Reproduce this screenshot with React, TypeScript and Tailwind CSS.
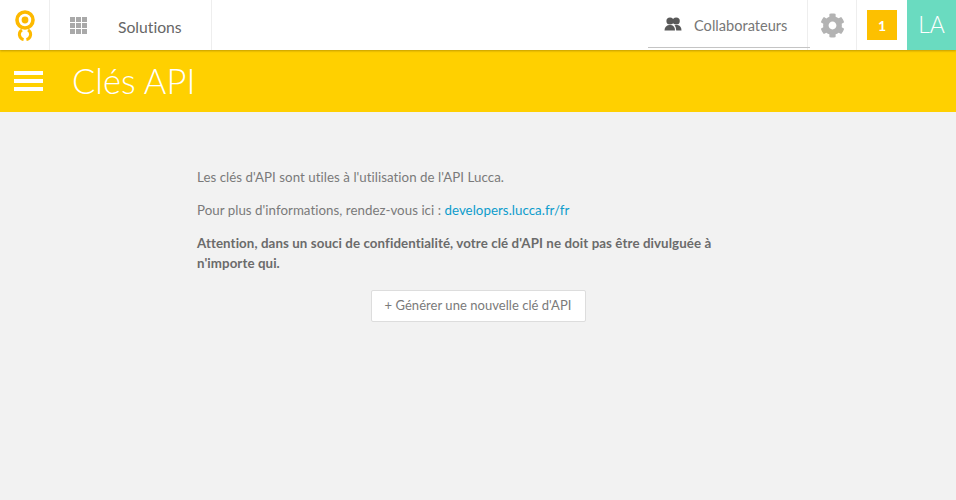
import { FaCog } from "react-icons/fa";

function Logo() {
	return (
		<svg width="22" height="32" viewBox="0 0 22 32" fill="none">
			<circle cx="11" cy="11" r="8" stroke="#fdb900" strokeWidth="3.6" />
			<circle cx="11" cy="11" r="3.4" fill="#fdb900" />
			<path d="M8 21 A5.2 5.2 0 0 0 9.6 30.6" stroke="#fdb900" strokeWidth="3" />
			<path d="M14 21 A5.2 5.2 0 0 1 12.4 30.6" stroke="#fdb900" strokeWidth="3" />
		</svg>
	);
}

function Grid() {
	return (
		<div className="grid w-[17px] grid-cols-3 gap-px">
			{Array.from({ length: 9 }).map((_, i) => (
				<span key={i} className="h-[5px] bg-[#a9a9a9]" />
			))}
		</div>
	);
}

function Users() {
	return (
		<svg width="18" height="14" viewBox="0 0 18 14" fill="#595959">
			<circle cx="6" cy="4" r="3.6" />
			<circle cx="12.2" cy="4" r="3.6" />
			<path d="M0.5 13.5 C0.5 10 2.5 8.5 5 8 L7 8 C9.5 8.5 11 10 11 13.5 Z" />
			<path d="M11.5 8 L13.5 8 C16 8.5 17.5 10 17.5 13.5 L12.2 13.5 C12 11 11.6 9.5 10.5 8.6 Z" />
		</svg>
	);
}

export default function App() {
	return (
		<div className="h-[500px] w-[956px] overflow-hidden bg-[#f2f2f2] font-['Lato','Liberation_Sans',sans-serif] text-[13.3px] text-[#7a7a7a] [font-variant-ligatures:none]">
			<header className="relative z-10 flex h-[50px] items-center bg-white shadow-[0_1px_2px_rgba(120,90,0,0.45)]">
				<div className="flex h-full w-[50px] items-center justify-center border-r border-[#eee]">
					<Logo />
				</div>
				<div className="flex h-full w-[162px] items-center border-r border-[#eee] pl-5">
					<Grid />
					<span className="ml-[31px] pt-[5px] text-[15.7px] text-[#666]">Solutions</span>
				</div>
				<div className="ml-auto flex h-full items-center">
					<div className="relative z-10 flex h-[48px] w-[162px] items-center self-start border-b border-[#c4c4c4] pl-[16px]">
						<Users />
						<span className="ml-[12px] pt-[5px] text-[14.6px] text-[#777]">Collaborateurs</span>
					</div>
					<div className="-ml-[3px] flex h-full w-[50px] items-center justify-center border-x border-[#eee]">
						<FaCog size={25} className="text-[#b3b3b3]" />
					</div>
					<div className="flex w-[50px] justify-center">
						<span className="flex h-[30px] w-[30px] items-center justify-center bg-[#fdc000] text-[14px] font-bold text-white">1</span>
					</div>
					<div className="flex h-full w-[49px] items-center justify-center bg-[#6adbc0] pb-[2px] text-[23px] font-light text-white">LA</div>
				</div>
			</header>
			<div className="flex h-[62px] items-center bg-[#ffd000] pl-[14px]">
				<div className="flex w-[29px] flex-col gap-[4px]">
					<span className="h-[4px] bg-white" />
					<span className="h-[4px] bg-white" />
					<span className="h-[4px] bg-white" />
				</div>
				<h1 className="ml-[29px] text-[34.5px] font-light text-white">Clés API</h1>
			</div>
			<main className="ml-[197px] w-[562px] pt-[55px] tracking-[0.04px]">
				<p className="leading-[20px]">Les clés d'API sont utiles à l'utilisation de l'API Lucca.</p>
				<p className="mt-[13px] leading-[20px]">
					Pour plus d'informations, rendez-vous ici : <a className="text-[#0d9ccc]">developers.lucca.fr/fr</a>
				</p>
				<p className="mt-[13px] max-w-[530px] font-bold leading-[20px] tracking-[0.09px] text-[#6b6b6b]">
					Attention, dans un souci de confidentialité, votre clé d'API ne doit pas être divulguée à n'importe qui.
				</p>
				<div className="mt-[17px] flex justify-center">
					<button className="h-[32px] w-[215px] rounded-[2px] border border-[#ddd] bg-white text-[13px] text-[#7a7a7a]">+ Générer une nouvelle clé d'API</button>
				</div>
			</main>
		</div>
	);
}
